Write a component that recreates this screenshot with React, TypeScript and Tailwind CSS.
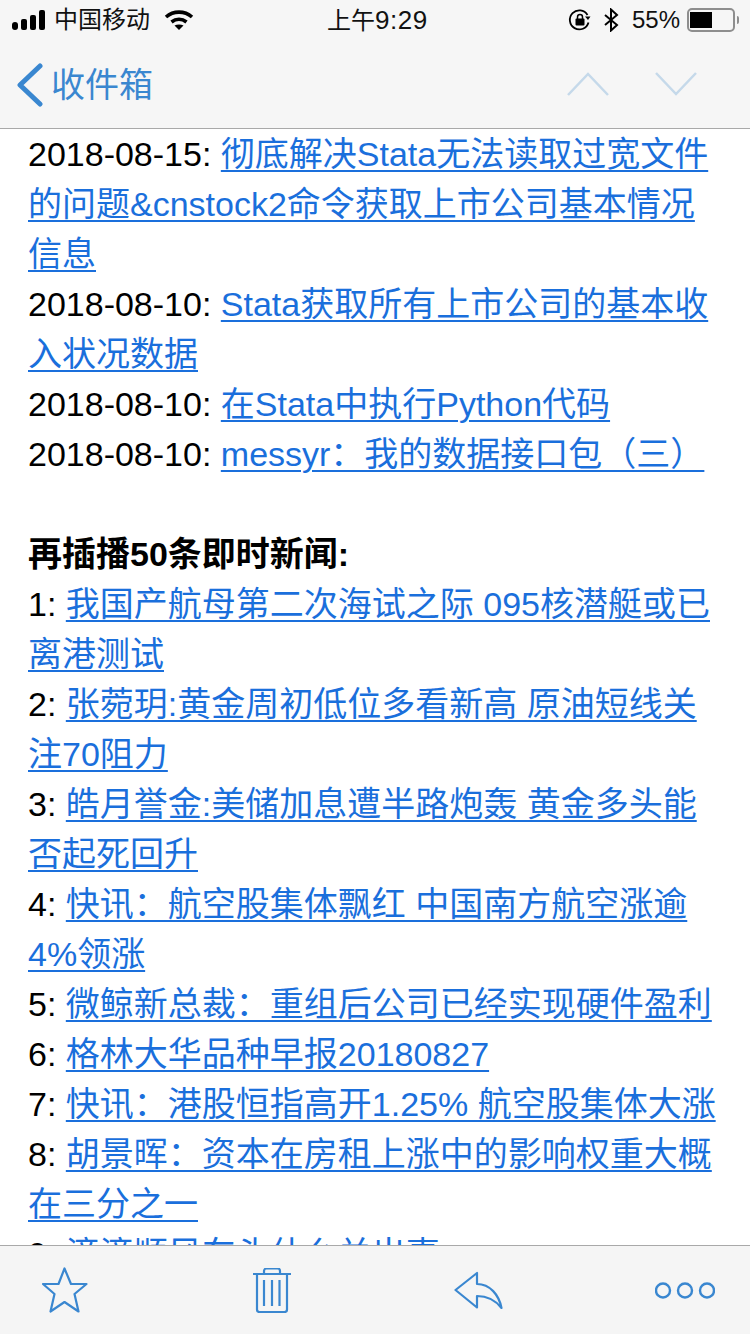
const cjk = "font-['Liberation_Sans','Noto_Sans_CJK_SC',sans-serif]";

type Row = { prefix?: string; link?: string; bold?: string };

const rows: Row[] = [
  { prefix: "2018-08-15: ", link: "彻底解决Stata无法读取过宽文件" },
  { link: "的问题&cnstock2命令获取上市公司基本情况" },
  { link: "信息" },
  { prefix: "2018-08-10: ", link: "Stata获取所有上市公司的基本收" },
  { link: "入状况数据" },
  { prefix: "2018-08-10: ", link: "在Stata中执行Python代码" },
  { prefix: "2018-08-10: ", link: "messyr：我的数据接口包（三）" },
  {},
  { bold: "再插播50条即时新闻:" },
  { prefix: "1: ", link: "我国产航母第二次海试之际 095核潜艇或已" },
  { link: "离港测试" },
  { prefix: "2: ", link: "张菀玥:黄金周初低位多看新高 原油短线关" },
  { link: "注70阻力" },
  { prefix: "3: ", link: "皓月誉金:美储加息遭半路炮轰 黄金多头能" },
  { link: "否起死回升" },
  { prefix: "4: ", link: "快讯：航空股集体飘红 中国南方航空涨逾" },
  { link: "4%领涨" },
  { prefix: "5: ", link: "微鲸新总裁：重组后公司已经实现硬件盈利" },
  { prefix: "6: ", link: "格林大华品种早报20180827" },
  { prefix: "7: ", link: "快讯：港股恒指高开1.25% 航空股集体大涨" },
  { prefix: "8: ", link: "胡景晖：资本在房租上涨中的影响权重大概" },
  { link: "在三分之一" },
  { prefix: "9: ", link: "滴滴顺风车头什么关出事" },
];

function StatusBar() {
  return (
    <div className="relative flex h-10 items-center justify-between bg-[#f6f6f6] pl-3 pr-[11px] text-[24px] text-[#111]">
      <div className="flex items-center">
        <svg width="33" height="20" viewBox="0 0 33 20" fill="#000">
          <rect x="0" y="12" width="6" height="8" rx="3" />
          <rect x="9" y="9" width="6" height="11" rx="2" />
          <rect x="18" y="5" width="6" height="15" rx="2" />
          <rect x="27" y="0" width="6" height="20" rx="2" />
        </svg>
        <span className="ml-[9px]">中国移动</span>
        <svg className="ml-[14px]" width="30" height="22" viewBox="0 0 30 22" fill="none" stroke="#000" strokeWidth="3.6">
          <path d="M2 8c7.500-6.500 18.500-6.500 26 0" />
          <path d="M7.500 13c4.500-3.500 10.500-3.500 15 0" />
          <path d="M15 21l-4.500-4.500c2.500-1.500 6.500-1.500 9 0z" fill="#000" stroke="none" />
        </svg>
      </div>
      <span className="absolute left-[327px] top-[1px]">
        上午<span className="text-[26px] tracking-[0.5px]">9:29</span>
      </span>
      <div className="flex items-center">
        <svg width="24" height="24" viewBox="0 0 24 24" fill="none" stroke="#000" strokeWidth="1.8">
          <path d="M20.500 14.500A9.500 9.500 0 1 1 19.500 7" />
          <path d="M22.500 8.500h-5.500l3 3.500z" fill="#000" stroke="none" />
          <rect x="7.500" y="10.500" width="9" height="7" rx="1" fill="#000" stroke="none" />
          <path d="M9.500 11V9a2.500 2.500 0 0 1 5 0v2" strokeWidth="1.500" />
        </svg>
        <svg className="ml-[11px]" width="16" height="24" viewBox="0 0 16 24" fill="none" stroke="#000" strokeWidth="2">
          <path d="M2 7l12 10-6 5.500V1.500L14 7 2 17" />
        </svg>
        <span className="ml-[13px]">55%</span>
        <div className="ml-[7px] flex items-center">
          <div className="h-[24px] w-[48px] rounded-[5px] border-2 border-[#8e8e8e] px-[1px] py-[2px]">
            <div className="h-full w-[22px] bg-black" />
          </div>
          <div className="ml-[2px] h-[8px] w-[2px] rounded-r-sm bg-[#8e8e8e]" />
        </div>
      </div>
    </div>
  );
}

function NavBar() {
  return (
    <div className="flex h-[89px] shrink-0 items-start border-b border-[#a9a9a9] bg-[#f6f6f6]">
      <svg className="ml-[17px] mt-[23px]" width="26" height="44" viewBox="0 0 26 44" fill="none" stroke="#3a87d0" strokeWidth="5" strokeLinecap="round" strokeLinejoin="round">
        <path d="M23 3L3 22l20 19" />
      </svg>
      <span className="ml-[8px] mt-[22px] text-[34px] leading-[46px] text-[#3a87d0]">收件箱</span>
      <div className="ml-auto mr-[53px] mt-[32px] flex gap-[46px]">
        <svg width="42" height="24" viewBox="0 0 42 24" fill="none" stroke="#c5d9ea" strokeWidth="2.500">
          <path d="M1 23L21 2l20 21" />
        </svg>
        <svg width="42" height="24" viewBox="0 0 42 24" fill="none" stroke="#c5d9ea" strokeWidth="2.500">
          <path d="M1 1l20 21L41 1" />
        </svg>
      </div>
    </div>
  );
}

function Toolbar() {
  return (
    <div className="flex h-[89px] shrink-0 items-start border-t border-[#a9a9a9] bg-[#f5f5f5] pl-[42px]">
      <svg className="mt-[21px]" width="46" height="46" viewBox="0 0 46 46" fill="none" stroke="#3a87d0" strokeWidth="2.200" strokeLinejoin="round">
        <path d="M22.500 1.500L29 17h15.500L32.500 27l4 17.500-14-9.500-14 9.500 4-17.500L1 17h15.500z" />
      </svg>
      <svg className="ml-[165px] mt-[22px]" width="38" height="45" viewBox="0 0 38 45" fill="none" stroke="#3a87d0" strokeWidth="2.200" strokeLinejoin="round">
        <path d="M0 6h38" />
        <path d="M11 6V3a2.500 2.500 0 0 1 2.500-2.500h11A2.500 2.500 0 0 1 27 3v3" />
        <path d="M4 6v35.500A2.500 2.500 0 0 0 6.500 44h25a2.500 2.500 0 0 0 2.500-2.500V6" />
        <path d="M11 12v26M19 12v26M26.500 12v26" />
      </svg>
      <svg className="ml-[163px] mt-[25px]" width="50" height="40" viewBox="0 0 50 40" fill="none" stroke="#3a87d0" strokeWidth="2.200" strokeLinejoin="round">
        <path d="M1.500 19L23 2v11c13 0 22 11 24.500 24C42 30 34 25 23 25v11.500z" />
      </svg>
      <svg className="ml-[151px] mt-[36px]" width="60" height="17" viewBox="0 0 60 17" fill="none" stroke="#3a87d0" strokeWidth="2.400">
        <circle cx="8" cy="8.500" r="7" />
        <circle cx="30" cy="8.500" r="7" />
        <circle cx="52" cy="8.500" r="7" />
      </svg>
    </div>
  );
}

export default function App() {
  return (
    <div className={`flex h-[1334px] w-[750px] flex-col overflow-hidden bg-white ${cjk}`}>
      <StatusBar />
      <NavBar />
      <div className="min-h-0 flex-1 overflow-hidden px-[28px] text-[34px] leading-[50px] text-black">
        {rows.map((row, i) => (
          <div key={i} className="h-[50px] whitespace-nowrap">
            {row.prefix}
            {row.link && <span className="text-[#1a6fdc] underline decoration-2 underline-offset-[4px]">{row.link}</span>}
            {row.bold && <span className="font-bold">{row.bold}</span>}
          </div>
        ))}
      </div>
      <Toolbar />
    </div>
  );
}
